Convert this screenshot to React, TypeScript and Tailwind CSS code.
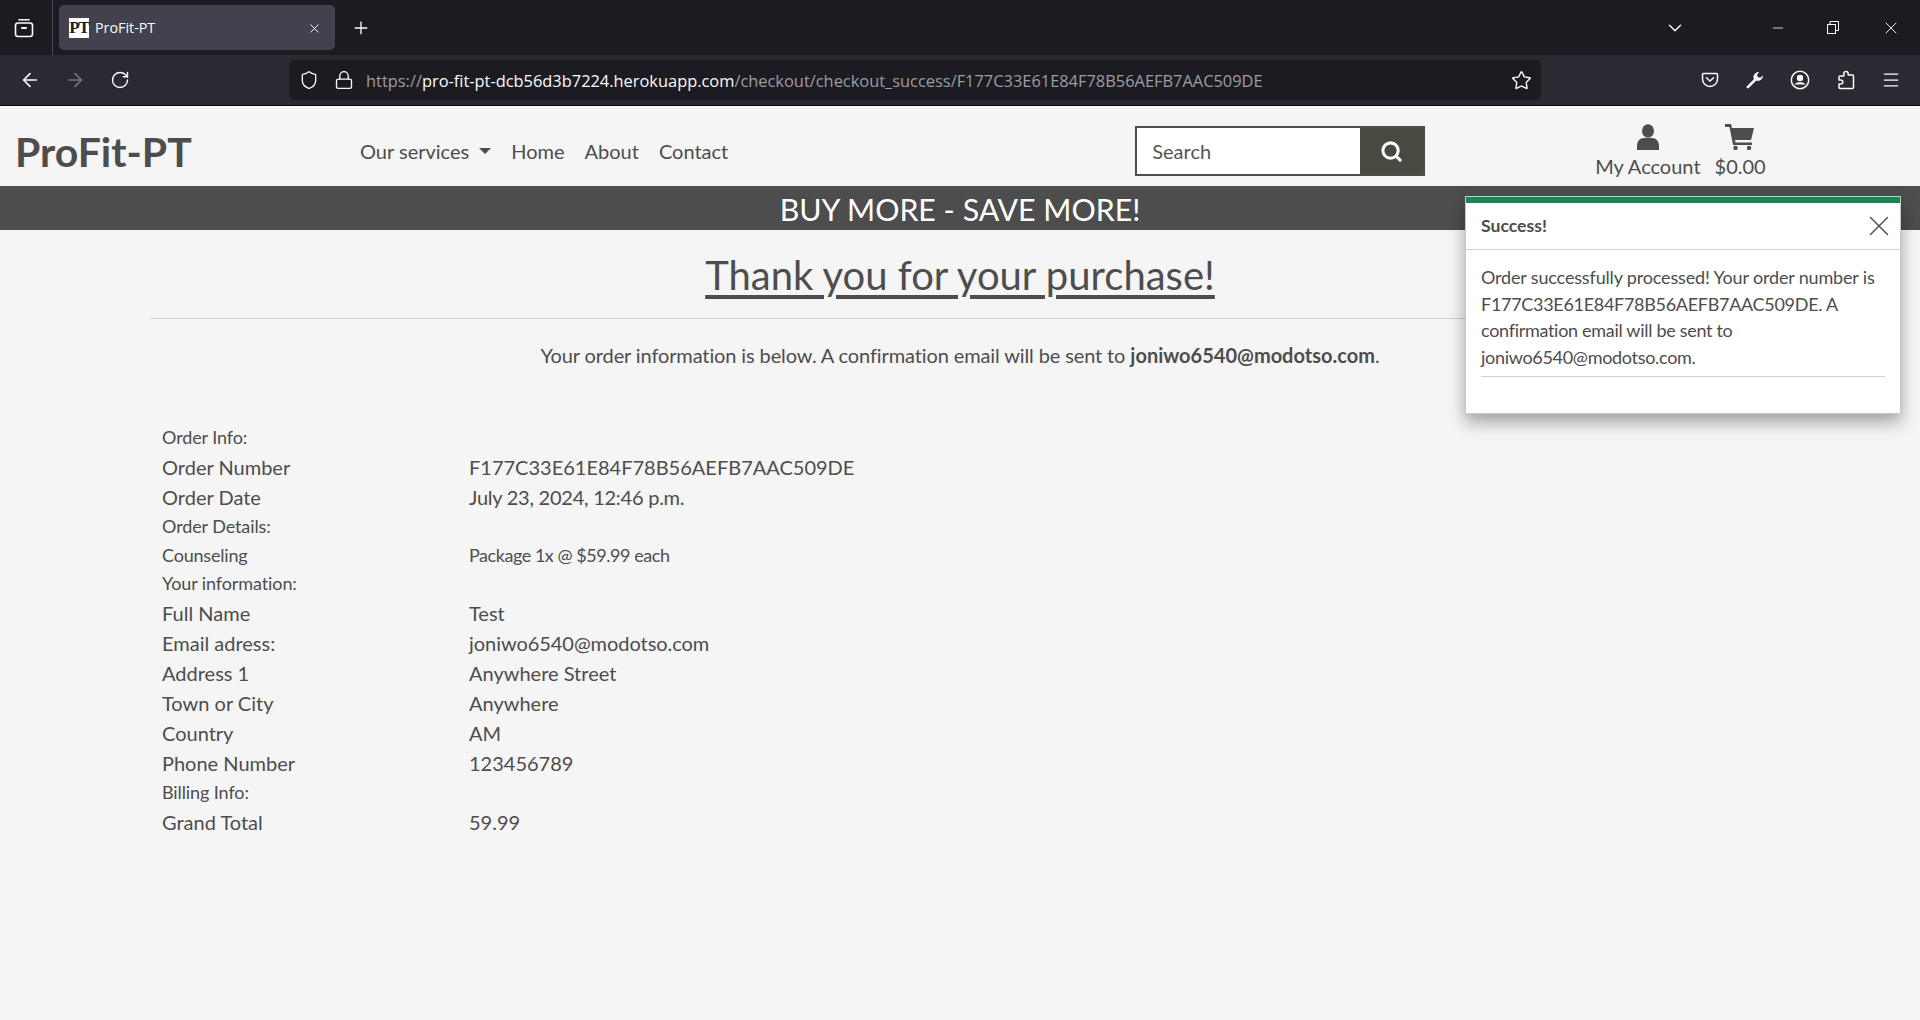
import { ArrowLeft, ArrowRight, ChevronDown, Lock, Minus, Plus, RotateCw, Shield, Star, X, Menu, Search } from "lucide-react";

const LATO = "font-['Lato',sans-serif]";

type Row = { label: string; value?: string; kind: "section" | "item" | "line"; valueClass?: string };

const ROWS: Row[] = [
  { label: "Order Info:", kind: "section" },
  { label: "Order Number", value: "F177C33E61E84F78B56AEFB7AAC509DE", kind: "line" },
  { label: "Order Date", value: "July 23, 2024, 12:46 p.m.", kind: "line", valueClass: "tracking-[-0.25px]" },
  { label: "Order Details:", kind: "section" },
  { label: "Counseling", value: "Package 1x @ $59.99 each", kind: "item", valueClass: "tracking-[-0.45px]" },
  { label: "Your information:", kind: "section" },
  { label: "Full Name", value: "Test", kind: "line" },
  { label: "Email adress:", value: "joniwo6540@modotso.com", kind: "line", valueClass: "tracking-[-0.05px]" },
  { label: "Address 1", value: "Anywhere Street", kind: "line" },
  { label: "Town or City", value: "Anywhere", kind: "line" },
  { label: "Country", value: "AM", kind: "line" },
  { label: "Phone Number", value: "123456789", kind: "line" },
  { label: "Billing Info:", kind: "section" },
  { label: "Grand Total", value: "59.99", kind: "line" },
];

function TabsIcon() {
  return (
    <svg width="20" height="20" viewBox="0 0 20 20" fill="none" stroke="#fbfbfe" strokeWidth="1.600">
      <path d="M5 1.800h10" strokeLinecap="round" />
      <rect x="1.500" y="5" width="17" height="13.500" rx="2.500" />
      <path d="M8 10h4" strokeLinecap="round" strokeWidth="2" />
    </svg>
  );
}

function PuzzleIcon() {
  return (
    <svg width="20" height="20" viewBox="0 0 20 20" fill="none" stroke="#fbfbfe" strokeWidth="1.500" strokeLinejoin="round">
      <path d="M10 1.500c1.500 0 2.200 1 2.200 2.200v1.300h4.300a1 1 0 0 1 1 1v11.500a1 1 0 0 1-1 1H4a1 1 0 0 1-1-1v-3.500h1.500c1.300 0 2.300-.8 2.300-2s-1-2-2.300-2H3V7a1 1 0 0 1 1-1h3.800V3.700c0-1.200.7-2.200 2.200-2.200z" />
    </svg>
  );
}

function WrenchIcon() {
  return (
    <svg width="20" height="20" viewBox="0 0 20 20" fill="#fbfbfe">
      <path d="M2.800 17.200 10.500 9.500" stroke="#fbfbfe" strokeWidth="2.600" strokeLinecap="round" />
      <path d="M18 5.200a5.200 5.200 0 0 1-7.600 5L8.500 8.300a5.200 5.200 0 0 1 5.700-6.200L12 4.800l1 2.400 2.400.6z" />
    </svg>
  );
}

function PocketIcon() {
  return (
    <svg width="18" height="18" viewBox="0 0 18 18" fill="none" stroke="#fbfbfe" strokeWidth="1.500">
      <path d="M2.500 2.500h13a1 1 0 0 1 1 1V8a7.500 7.500 0 0 1-15 0V3.500a1 1 0 0 1 1-1z" />
      <path d="M5.500 6.800 9 10l3.500-3.200" strokeLinecap="round" />
    </svg>
  );
}

function AccountIcon() {
  return (
    <svg width="20" height="20" viewBox="0 0 20 20" fill="none">
      <circle cx="10" cy="10" r="8.700" stroke="#fbfbfe" strokeWidth="1.500" />
      <circle cx="10" cy="8" r="3.200" fill="#fbfbfe" />
      <path d="M4.500 14.500c1-1.700 3-2.200 5.500-2.200s4.500.5 5.500 2.200z" fill="#fbfbfe" />
    </svg>
  );
}

function RestoreIcon() {
  return (
    <svg width="12" height="13" viewBox="0 0 12 13" fill="none" stroke="#fbfbfe" strokeWidth="1">
      <rect x="0.500" y="3.500" width="8" height="9" />
      <path d="M3 3.500V.5h8.500v9H8.500" />
    </svg>
  );
}

function Browser() {
  return (
    <div className="shrink-0 font-['Open_Sans',sans-serif]">
      {/* tab strip */}
      <div className="h-[55px] bg-[#1c1b22] flex items-center text-[#fbfbfe]">
        <div className="w-[53px] h-full flex items-center justify-center border-r border-[#4a4954] pr-[4px]">
          <TabsIcon />
        </div>
        <div className="ml-[6px] w-[276px] h-[45px] rounded-[5px] bg-[#42414d] flex items-center pl-[10px] pr-[13px] pt-[1px]">
          <div className="w-[20px] h-[20px] bg-white text-[#222] text-[17px] leading-[20px] font-bold text-center tracking-[-1px] font-['Liberation_Serif',serif]">
            PT
          </div>
          <span className="ml-[6px] text-[14.300px] flex-1">ProFit-PT</span>
          <X size={15} strokeWidth={1.5} />
        </div>
        <div className="ml-[16px] pt-[1px]">
          <Plus size={20} strokeWidth={1.6} />
        </div>
        <div className="flex-1" />
        <ChevronDown size={22} strokeWidth={1.5} className="mt-[1px]" />
        <div className="w-[84px]" />
        <Minus size={16} strokeWidth={1.2} />
        <div className="w-[41px]" />
        <RestoreIcon />
        <div className="w-[42px]" />
        <X size={20} strokeWidth={1.1} />
        <div className="w-[19px]" />
      </div>
      {/* nav bar */}
      <div className="h-[51px] bg-[#2b2a33] border-b border-[#0c0c0d] flex items-center text-[#fbfbfe]">
        <div className="w-[60px] flex justify-center">
          <ArrowLeft size={22} strokeWidth={1.7} />
        </div>
        <div className="w-[30px] flex justify-center text-[#77767d]">
          <ArrowRight size={22} strokeWidth={1.7} />
        </div>
        <div className="w-[60px] flex justify-center">
          <RotateCw size={20} strokeWidth={1.7} />
        </div>
        <div className="ml-[139px] w-[1252px] h-[40px] rounded-[5px] bg-[#1c1b22] flex items-center pr-[9px]">
          <Shield size={20} strokeWidth={1.6} className="ml-[10px]" />
          <Lock size={20} strokeWidth={1.6} className="ml-[15px]" />
          <div className="ml-[12px] flex-1 pt-[2px] text-[16.400px] whitespace-nowrap text-[#9d9da3]">
            https://<span className="text-[#fbfbfe]">pro-fit-pt-dcb56d3b7224.herokuapp.com</span>/checkout/checkout_success/F177C33E61E84F78B56AEFB7AAC509DE
          </div>
          <Star size={21} strokeWidth={1.6} />
        </div>
        <div className="flex-1 flex items-center justify-between pl-[160px] pr-[19px]">
          <PocketIcon />
          <WrenchIcon />
          <AccountIcon />
          <PuzzleIcon />
          <Menu size={20} strokeWidth={1.5} />
        </div>
      </div>
    </div>
  );
}

function Header() {
  return (
    <header className="h-[80px] pt-[10px] flex items-center text-[#4d4d4d]">
      <div className="w-[360px] pl-[15px] text-[41px] font-bold leading-none">ProFit-PT</div>
      <nav className="flex items-center text-[20px] gap-[20px]">
        <span className="flex items-center">
          Our services
          <span className="ml-[10px] w-0 h-0 border-x-[6px] border-x-transparent border-t-[6px] border-t-[#4d4d4d]" />
        </span>
        <span>Home</span>
        <span>About</span>
        <span>Contact</span>
      </nav>
      <div className="ml-[407px] w-[290px] h-[50px] flex border-2 border-[#4d4d4d]">
        <div className="flex-1 bg-white pl-[15px] flex items-center text-[20px] text-[#555]">Search</div>
        <div className="w-[63px] bg-[#464a40] flex items-center justify-center text-white">
          <Search size={23} strokeWidth={3.200} />
        </div>
      </div>
      <div className="ml-[170px] flex items-start gap-[14px] text-[20px] leading-[24px]">
        <div className="flex flex-col items-center gap-[4px]">
          <svg width="26" height="26" viewBox="0 0 26 26" fill="#4d4d4d">
            <ellipse cx="13" cy="7" rx="6" ry="6.800" />
            <path d="M2 26v-4c0-5 3-8 7-8h8c4 0 7 3 7 8v4z" />
          </svg>
          <span>My Account</span>
        </div>
        <div className="flex flex-col items-center gap-[4px]">
          <svg width="30" height="26" viewBox="0 0 30 26" fill="#4d4d4d">
            <path d="M0 0h6l1 4h22l-3 12H10l.5 2.500H27V21H8L4.500 3H0z" />
            <circle cx="10.500" cy="24" r="2.200" />
            <circle cx="24" cy="24" r="2.200" />
          </svg>
          <span>$0.00</span>
        </div>
      </div>
    </header>
  );
}

function Toast() {
  return (
    <div className="absolute left-[1465px] top-[196px] w-[436px] h-[218px] bg-white border border-[#c8c8c8] shadow-[0_8px_16px_rgba(0,0,0,0.35)] text-[#4d4d4d]">
      <div className="h-[6px] bg-[#198754]" />
      <div className="h-[47px] flex items-center justify-between px-[15px] border-b border-[#d0d0d0]">
        <span className="text-[17.600px] font-bold">Success!</span>
        <X size={34} strokeWidth={1} className="-mr-[11px]" />
      </div>
      <div className="px-[15px] pt-[14px] text-[18px] leading-[26.500px]">
        <div className="tracking-[-0.3px]">
          <span className="tracking-[-0.16px]">Order successfully processed! Your order number is</span> F177C33E61E84F78B56AEFB7AAC509DE. A confirmation email will be sent to joniwo6540@modotso.com.
        </div>
        <hr className="mt-[6px] border-[#d0d0d0]" />
      </div>
    </div>
  );
}

export default function App() {
  return (
    <div className={`relative w-[1920px] h-[1020px] overflow-hidden bg-[#f5f5f5] ${LATO}`}>
      <Browser />
      <Header />
      <div className="h-[44px] bg-[#4d4d4d] text-white text-[30.300px] leading-[46px] text-center">BUY MORE - SAVE MORE!</div>
      <main className="mx-[150px] text-[#4d4d4d]">
        <h1 className="pt-[21px] text-[40px] leading-[48px] text-center underline underline-offset-[5px]">
          Thank you for your purchase!
        </h1>
        <hr className="mt-[19px] border-[#cfcfcf]" />
        <p className="mt-[21px] text-[20px] leading-[30px] text-center tracking-[-0.12px]">
          Your order information is below. A confirmation email will be sent to <strong className="tracking-normal">joniwo6540@modotso.com</strong>.
        </p>
        <div className="mt-[53px] pl-[12px]">
          {ROWS.map((row) => (
            <div
              key={row.label}
              className={
                row.kind === "line"
                  ? "flex h-[30px] text-[20px] items-center"
                  : row.kind === "item"
                    ? "flex h-[28px] text-[18px] items-center tracking-[-0.2px]"
                    : "flex h-[29px] text-[18px] items-center tracking-[-0.1px]"
              }
            >
              <div className="w-[307px]">{row.label}</div>
              <div className={row.valueClass}>{row.value}</div>
            </div>
          ))}
        </div>
      </main>
      <Toast />
    </div>
  );
}
